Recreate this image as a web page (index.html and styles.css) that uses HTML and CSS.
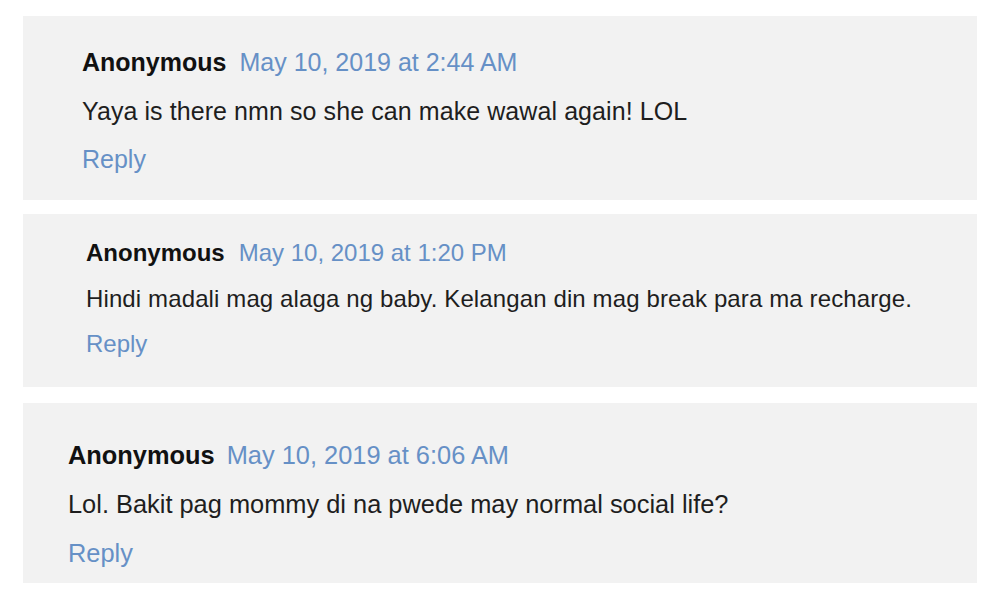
FILE: index.html
```html
<!DOCTYPE html>
<html lang="en">
<head>
    <meta charset="UTF-8">
    <meta name="viewport" content="width=device-width, initial-scale=1.0">
    <title>Comments</title>
    <link rel="stylesheet" href="styles.css">
</head>
<body>
    <div class="comments">
        <div class="comment comment-first">
            <div class="comment-header">
                <span class="comment-author">Anonymous</span>
                <a href="#" class="comment-date">May 10, 2019 at 2:44 AM</a>
            </div>
            <p class="comment-body">Yaya is there nmn so she can make wawal again! LOL</p>
            <a href="#" class="comment-reply">Reply</a>
        </div>

        <div class="comment comment-second">
            <div class="comment-header">
                <span class="comment-author">Anonymous</span>
                <a href="#" class="comment-date">May 10, 2019 at 1:20 PM</a>
            </div>
            <p class="comment-body">Hindi madali mag alaga ng baby. Kelangan din mag break para ma recharge.</p>
            <a href="#" class="comment-reply">Reply</a>
        </div>

        <div class="comment comment-third">
            <div class="comment-header">
                <span class="comment-author">Anonymous</span>
                <a href="#" class="comment-date">May 10, 2019 at 6:06 AM</a>
            </div>
            <p class="comment-body">Lol. Bakit pag mommy di na pwede may normal social life?</p>
            <a href="#" class="comment-reply">Reply</a>
        </div>
    </div>
</body>
</html>
```

FILE: styles.css
```css
body {
    margin: 0;
    padding: 0;
    font-family: "Liberation Sans", Arial, sans-serif;
    background-color: #ffffff;
    color: #1e1e1e;
}

.comments {
    display: flex;
    flex-direction: column;
    padding: 16px 23px 0;
}

.comment {
    background-color: #f2f2f2;
    display: flex;
    flex-direction: column;
    align-items: flex-start;
    box-sizing: border-box;
}

.comment-header {
    display: flex;
    align-items: baseline;
    gap: 13px;
}

.comment-author {
    font-weight: bold;
    color: #111111;
}

.comment-date,
.comment-reply {
    color: #6690c6;
    text-decoration: none;
}

.comment-body {
    margin: 0;
}

/* each block sits a little differently */
.comment-first {
    font-size: 25px;
    line-height: 48.5px;
    padding: 22px 20px 16px 59px;
    height: 184px;
}

.comment-first .comment-body {
    letter-spacing: 0.08px;
}

.comment-second {
    margin-top: 14px;
    font-size: 24px;
    line-height: 45.5px;
    padding: 16px 20px 20px 63px;
    height: 173px;
}

.comment-second .comment-header {
    gap: 14px;
}

.comment-second .comment-body {
    letter-spacing: 0.12px;
}

.comment-third {
    margin-top: 16px;
    font-size: 25.4px;
    line-height: 49px;
    padding: 28px 20px 5px 45px;
    height: 180px;
}

.comment-third .comment-header {
    gap: 12px;
}
```
